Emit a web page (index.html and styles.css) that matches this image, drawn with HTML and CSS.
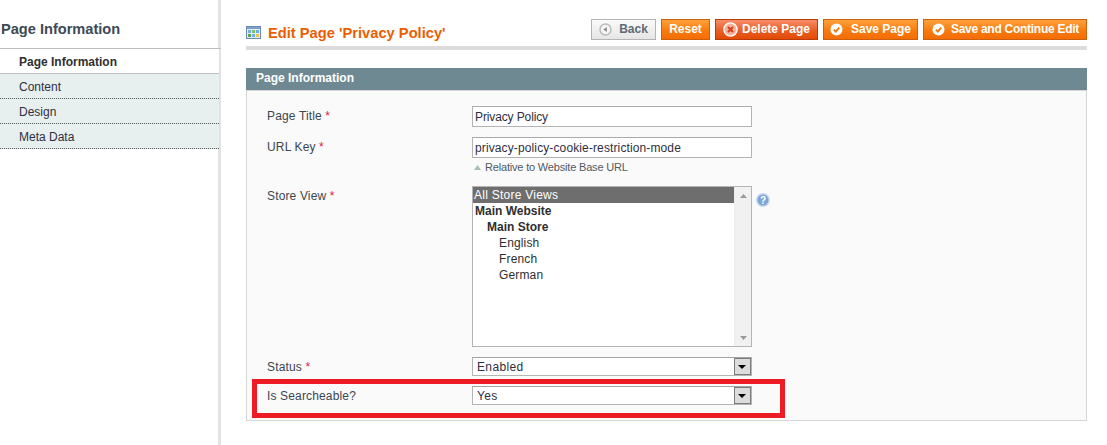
FILE: index.html
```html
<!DOCTYPE html>
<html lang="en">
<head>
<meta charset="utf-8">
<title>Edit Page</title>
<link rel="stylesheet" href="styles.css">
</head>
<body>
<div class="page">
  <aside class="side">
    <h3 class="side-title">Page Information</h3>
    <ul class="tabs">
      <li class="tab tab-active">Page Information</li>
      <li class="tab">Content</li>
      <li class="tab">Design</li>
      <li class="tab">Meta Data</li>
    </ul>
  </aside>
  <main class="main">
    <div class="head">
      <svg class="head-icon" width="15" height="13" viewBox="0 0 15 13">
        <rect x="0.5" y="0.5" width="14" height="12" fill="#e4edf6" stroke="#6b8bb5"/>
        <rect x="1" y="1" width="13" height="2" fill="#7f9fca"/>
        <rect x="2" y="4" width="3" height="3" fill="#6fb2e6"/><rect x="6" y="4" width="3" height="3" fill="#7fc15c"/><rect x="10" y="4" width="3" height="3" fill="#6fb2e6"/>
        <rect x="2" y="8" width="3" height="3" fill="#5fa04a"/><rect x="6" y="8" width="3" height="3" fill="#6fb2e6"/><rect x="10" y="8" width="3" height="3" fill="#efc14e"/>
      </svg>
      <h3 class="head-title">Edit Page 'Privacy Policy'</h3>
      <div class="actions">
        <button class="btn btn-back" type="button">
          <svg class="ic" width="13" height="13" viewBox="0 0 13 13"><circle cx="6.5" cy="6.5" r="5.5" fill="#f4f4f4" stroke="#b9b9b9" stroke-width="1.4"/><path d="M7.8 4v5L4.4 6.5z" fill="#8a8a8a"/></svg>
          Back</button>
        <button class="btn btn-reset" type="button">Reset</button>
        <button class="btn btn-del" type="button">
          <svg class="ic" width="15" height="15" viewBox="0 0 15 15"><circle cx="7.5" cy="7.5" r="6.6" fill="#f6b39c" stroke="#fff" stroke-width="1.4"/><path d="M5 5l5 5M10 5l-5 5" stroke="#d8401c" stroke-width="2.2"/></svg>
          Delete Page</button>
        <button class="btn btn-save" type="button">
          <svg class="ic" width="13" height="13" viewBox="0 0 13 13"><circle cx="6.5" cy="6.5" r="6" fill="#fff"/><path d="M3.8 6.6l2 2 3.4-4" fill="none" stroke="#f07a12" stroke-width="1.8"/></svg>
          Save Page</button>
        <button class="btn btn-save btn-cont" type="button">
          <svg class="ic" width="13" height="13" viewBox="0 0 13 13"><circle cx="6.5" cy="6.5" r="6" fill="#fff"/><path d="M3.8 6.6l2 2 3.4-4" fill="none" stroke="#f07a12" stroke-width="1.8"/></svg>
          Save and Continue Edit</button>
      </div>
    </div>
    <section class="box">
      <h4 class="box-title">Page Information</h4>
      <div class="fields">
        <div class="row row-title">
          <label class="lbl">Page Title <span class="req">*</span></label>
          <input class="text text-title" type="text" value="Privacy Policy" readonly>
        </div>
        <div class="row row-url">
          <label class="lbl">URL Key <span class="req">*</span></label>
          <div class="val">
            <input class="text text-url" type="text" value="privacy-policy-cookie-restriction-mode" readonly>
            <p class="note"><svg class="note-ic" width="7" height="5" viewBox="0 0 7 5"><path d="M3.5 0L7 5H0z" fill="#a9bcbc"/></svg>Relative to Website Base URL</p>
          </div>
        </div>
        <div class="row row-store">
          <label class="lbl">Store View <span class="req">*</span></label>
          <div class="multi">
            <div class="opts">
              <div class="opt opt-sel">All Store Views</div>
              <div class="opt opt-b">Main Website</div>
              <div class="opt opt-b ind1">Main Store</div>
              <div class="opt ind2">English</div>
              <div class="opt ind2">French</div>
              <div class="opt ind2">German</div>
            </div>
            <div class="scroll">
              <svg width="7" height="4" viewBox="0 0 7 4"><path d="M3.5 0L7 4H0z" fill="#9a9a9a"/></svg>
              <svg width="7" height="4" viewBox="0 0 7 4"><path d="M0 0h7L3.5 4z" fill="#9a9a9a"/></svg>
            </div>
          </div>
          <svg class="help" width="14" height="14" viewBox="0 0 14 14"><circle cx="7" cy="7" r="6.2" fill="#7fa5d6" stroke="#c4d8ee" stroke-width="1.4"/><text x="7" y="10.5" text-anchor="middle" class="help-q">?</text></svg>
        </div>
        <div class="row row-status">
          <label class="lbl">Status <span class="req">*</span></label>
          <div class="sel"><span>Enabled</span><span class="arrow"></span></div>
        </div>
        <div class="row row-search">
          <label class="lbl">Is Searcheable?</label>
          <div class="sel"><span>Yes</span><span class="arrow"></span></div>
        </div>
      </div>
      <div class="mark"></div>
    </section>
  </main>
</div>
</body>
</html>
```
FILE: styles.css
```css
* { box-sizing: border-box; }
html, body { margin: 0; padding: 0; background: #fff; }
body { font: 12px/15px "Liberation Sans", Arial, sans-serif; color: #2f2f2f; height: 445px; overflow: hidden; }
.page { display: flex; height: 445px; }

.side { width: 221px; flex: none; border-right: 3px solid #e2e2e2; padding-top: 19px; }
.side-title { margin: 0 -3px 0 0; height: 30px; padding: 0 0 0 1px; font-size: 14.6px; line-height: 20px; font-weight: bold; color: #3d4a55; border-bottom: 1px solid #bebebe; }
.tabs { list-style: none; margin: 0 -1px 0 0; padding: 0; }
.tab { height: 25px; padding: 6px 0 0 19px; line-height: 14px; background: #e7efef; color: #2f2f3f; border-bottom: 1px dotted #555; }
.tab-active { background: #fff; color: #2f2f2f; font-weight: bold; border-bottom: 1px solid #bebebe; }

.main { width: 841px; margin-left: 25px; flex: none; }
.head { display: flex; align-items: flex-start; height: 49px; padding-top: 19px; border-bottom: 4px solid #dcdcdc; margin-top: 1px; margin-bottom: 18px; }
.head-icon { margin-top: 6px; flex: none; }
.head-title { margin: 3px 0 0 7px; font-size: 14.7px; line-height: 20px; font-weight: bold; color: #eb5e00; }
.actions { margin-left: auto; display: flex; gap: 5px; margin-top: -1px; }
.btn { height: 21px; padding: 0; display: flex; align-items: center; justify-content: center; gap: 8px; font: bold 12px/15px "Liberation Sans", Arial, sans-serif; color: #fff; border: 1px solid #c9600d; background: linear-gradient(#ffa03c, #f77c10 55%, #f56c04); }
.btn-back { width: 65px; color: #5f6b75; border-color: #b4b4b4; background: linear-gradient(#fafafa, #e6e6e6); gap: 7px; }
.btn-reset { width: 49px; }
.btn-del { width: 103px; gap: 4px; border-color: #b83a04; background: linear-gradient(#f58e6a, #ea5e25 55%, #e24a04); }
.btn-save { width: 95px; }
.btn-cont { width: 164px; gap: 6px; letter-spacing: -0.27px; padding-left: 1px; }
.ic { flex: none; }

.box { position: relative; }
.box-title { margin: 0; height: 22px; padding: 3px 0 0 10px; font-size: 12px; line-height: 15px; font-weight: bold; color: #fff; background: #6f8992; }
.fields { height: 331px; background: #fafafa; border: 1px solid #d6d6d6; padding: 15px 0 0 20px; }
.row { display: flex; align-items: flex-start; }
.lbl { width: 205px; flex: none; padding-top: 3px; color: #3b4650; letter-spacing: 0.15px; }
.req { color: #e01b3c; }
.val { width: 280px; }
.text { display: block; width: 280px; height: 21px; padding: 0 2px; margin: 0; border: 1px solid #b4b4b4; border-top-color: #aaa; background: #fff; font: 12px/15px "Liberation Sans", Arial, sans-serif; color: #2f2f3f; outline: none; }
.text-title { letter-spacing: -0.12px; }
.text-url { letter-spacing: 0.12px; }
.row-url { margin-top: 10px; }
.note { margin: 2px 0 0; height: 15px; font-size: 11px; line-height: 15px; letter-spacing: -0.18px; color: #4f5a64; display: flex; align-items: center; }
.note-ic { margin: 0 4px 0 2px; flex: none; }
.row-store { margin-top: 11px; }
.multi { width: 280px; height: 161px; display: flex; border: 1px solid #b4b4b4; background: #fff; font-size: 12px; line-height: 16px; color: #2f2f2f; }
.opts { flex: 1; }
.opt { height: 16px; padding-left: 2px; letter-spacing: 0.15px; }
.opt-sel { background: #6e6e6e; color: #fff; padding-left: 1px; letter-spacing: 0.25px; }
.opt-b { font-weight: bold; letter-spacing: 0; }
.ind1 { padding-left: 14px; }
.ind2 { padding-left: 26px; }
.scroll { width: 17px; background: #f1f1f1; border-left: 1px solid #ececec; display: flex; flex-direction: column; justify-content: space-between; align-items: center; padding: 7px 0 6px; }
.help { margin: 7px 0 0 4px; flex: none; }
.help-q { font: bold 10px "Liberation Sans", Arial, sans-serif; fill: #fff; }
.row-status { margin-top: 10px; }
.row-search { margin-top: 10px; }
.sel { width: 280px; height: 19px; display: flex; justify-content: space-between; border: 1px solid #b4b4b4; border-top-color: #a4a4a4; background: #fff; font-size: 12px; line-height: 18px; letter-spacing: 0.35px; padding-left: 4px; color: #2f2f3f; }
.arrow { width: 17px; height: 17px; background: #dcdcdc; border: 1px solid #7c7c7c; position: relative; }
.arrow::after { content: ""; position: absolute; left: 3px; top: 6px; border: 4px solid transparent; border-top: 4px solid #000; border-bottom: 0; }
.mark { position: absolute; left: 6px; top: 311px; width: 533px; height: 39px; border: 5px solid #ed1c24; }
```
